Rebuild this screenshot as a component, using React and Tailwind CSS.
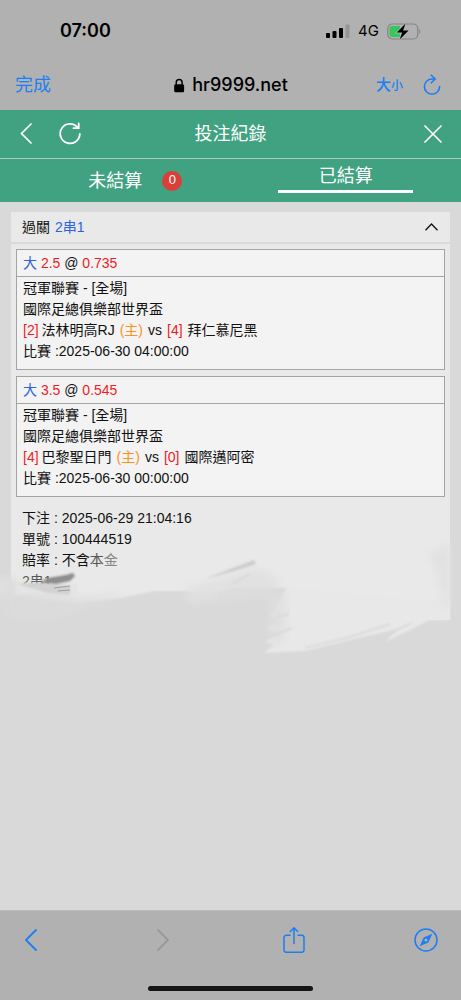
import { ChevronLeft, ChevronRight } from 'lucide-react'

const bets = [
  {
    pick: '2.5',
    odds: '0.735',
    league: '冠軍聯賽 - [全場]',
    cup: '國際足總俱樂部世界盃',
    home: '法林明高RJ',
    homeScore: 2,
    away: '拜仁慕尼黑',
    awayScore: 4,
    time: '2025-06-30 04:00:00',
  },
  {
    pick: '3.5',
    odds: '0.545',
    league: '冠軍聯賽 - [全場]',
    cup: '國際足總俱樂部世界盃',
    home: '巴黎聖日門',
    homeScore: 4,
    away: '國際邁阿密',
    awayScore: 0,
    time: '2025-06-30 00:00:00',
  },
]

function StatusBar() {
  return (
    <div className="flex h-[62px] items-center justify-between pl-[60px] pr-[40px] font-['Inter','Noto_Sans_CJK_TC',sans-serif] text-black">
      <span className="text-lg font-semibold">07:00</span>
      <div className="flex items-center gap-2">
        <svg className="h-[15px] w-6" viewBox="0 0 24 15">
          <rect x="0" y="9" width="4" height="5" rx="1" />
          <rect x="6.5" y="7" width="4" height="7" rx="1" />
          <rect x="13" y="4" width="4" height="10" rx="1" />
          <rect x="19.5" y="0.5" width="4" height="13.5" rx="1" fill="#959595" />
        </svg>
        <span className="text-[15px]">4G</span>
        <svg className="h-[17px] w-[34px]" viewBox="0 0 34 17">
          <rect x="0.8" y="1" width="30" height="15" rx="4.5" fill="none" stroke="#838383" strokeWidth="1.2" />
          <path d="M5.5 3H13v11H5.5a3 3 0 0 1-3-3V6a3 3 0 0 1 3-3z" fill="#34c759" />
          <path d="M32.3 6.2c1.4.5 1.4 4.1 0 4.6z" fill="#838383" />
          <path d="M18.5 0.5 9.8 9.6h5.4L12.6 16.5 21.6 7.4h-5.5z" stroke="#b1b1b1" strokeWidth="1.6" paintOrder="stroke" />
        </svg>
      </div>
    </div>
  )
}

function AddressBar() {
  return (
    <div className="relative flex h-[46px] items-center justify-between pl-[15px] pr-5 font-['Inter','Noto_Sans_CJK_TC',sans-serif]">
      <button className="text-lg text-[#1b7ff2]">完成</button>
      <div className="absolute left-1/2 flex -translate-x-1/2 items-center gap-2 text-black">
        <svg className="h-[15px] w-[11px]" viewBox="0 0 11 15">
          <path d="M2.6 7V4.3a2.9 2.9 0 0 1 5.8 0V7" fill="none" stroke="#000" strokeWidth="1.5" />
          <rect x="0.5" y="6.3" width="10" height="8" rx="1.5" />
        </svg>
        <span className="text-lg font-medium">hr9999.net</span>
      </div>
      <div className="flex items-center gap-5 text-[#1b7ff2]">
        <button className="flex items-baseline font-medium">
          <span className="text-[15px]">大</span>
          <span className="text-xs">小</span>
        </button>
        <button aria-label="重新載入">
          <svg className="block h-[22px] w-[18px]" viewBox="0 0 18 22" fill="none" stroke="currentColor" strokeWidth="1.6" strokeLinecap="round" strokeLinejoin="round">
            <path d="M11.8 5H9a7.6 7.6 0 1 0 7.6 7.6" />
            <path d="M8.3 1.2 12.2 5 8.3 8.8" />
          </svg>
        </button>
      </div>
    </div>
  )
}

function Header() {
  return (
    <header className="bg-[#40a280] text-white">
      <div className="relative flex h-[49px] items-center justify-between border-b border-[#a5cfc0] px-3">
        <div className="flex items-center gap-4">
          <button aria-label="返回">
            <svg className="block size-7" viewBox="0 0 28 28" fill="none" stroke="currentColor" strokeWidth="1.7" strokeLinecap="round">
              <path d="M19 4 9.5 13.5 19 23" />
            </svg>
          </button>
          <button aria-label="刷新">
            <svg className="block size-7" viewBox="0 0 28 28" fill="none" stroke="currentColor" strokeWidth="1.8" strokeLinecap="round">
              <path d="M23.8 14A9.8 9.8 0 1 1 21.5 7.3" />
              <path d="M22.7 3.5V8.2H17.5" />
            </svg>
          </button>
        </div>
        <h1 className="absolute left-1/2 -translate-x-1/2 text-lg">投注紀錄</h1>
        <button aria-label="關閉" className="mr-[6px]">
          <svg className="block size-5" viewBox="0 0 20 20" fill="none" stroke="currentColor" strokeWidth="1.7" strokeLinecap="round">
            <path d="M2 2 18 18M18 2 2 18" />
          </svg>
        </button>
      </div>
      <nav className="grid h-[43px] grid-cols-2 text-lg">
        <button className="flex items-center justify-center">
          <span className="relative">
            未結算
            <span className="absolute left-full top-1 ml-5 flex size-5 items-center justify-center rounded-full bg-[#dc3f3a] font-['Liberation_Sans',sans-serif] text-[13px]">
              0
            </span>
          </span>
        </button>
        <button className="flex flex-col items-center pt-[3px]">
          <span className="leading-7">已結算</span>
          <span className="h-[3px] w-[135px] bg-white" />
        </button>
      </nav>
    </header>
  )
}

function BetCard({ bet }) {
  return (
    <section className="border border-[#a3a5a5] bg-[#f3f3f3]">
      <div className="border-b border-[#a3a5a5] px-[6px] leading-[26px]">
        <span className="text-[#2b63e0]">大</span> <span className="text-[#ee1c25]">{bet.pick}</span> @{' '}
        <span className="text-[#ee1c25]">{bet.odds}</span>
      </div>
      <div className="px-[6px] pb-[7px] pt-px leading-[21px]">
        <p>{bet.league}</p>
        <p>{bet.cup}</p>
        <p className="flex gap-[5px]">
          <span className="flex gap-[3px]">
            <span className="text-[#ee1c25]">[{bet.homeScore}]</span>
            <span>{bet.home}</span>
          </span>
          <span className="text-[#f7941d]">(主)</span>
          <span>vs</span>
          <span className="text-[#ee1c25]">[{bet.awayScore}]</span>
          <span>{bet.away}</span>
        </p>
        <p>比賽 :{bet.time}</p>
      </div>
    </section>
  )
}

// Brush marks that hide the lower part of the slip
function Smudge() {
  return (
    <svg className="pointer-events-none absolute inset-x-0 top-[288px] h-[190px] w-full" viewBox="0 0 461 190" preserveAspectRatio="none">
      <defs>
        <filter id="soft" x="-10%" y="-20%" width="120%" height="140%">
          <feGaussianBlur stdDeviation="4" />
        </filter>
        <filter id="edge" x="-10%" y="-10%" width="120%" height="120%">
          <feGaussianBlur stdDeviation="1" />
        </filter>
      </defs>
      {/* light paint dragged past the left edge */}
      <path d="M-6 88H14V108L-6 104z" fill="#e0e0e0" filter="url(#soft)" />
      {/* erased area */}
      <path d="M10 104 40 110 80 113 120 108 155 101 185 101 205 104 235 98 286 98 282 108 276 118 270 134H6z" fill="#d9d9d9" filter="url(#edge)" />
      <path d="M6 88 22 92 52 102 84 108 130 104 60 128H6z" fill="#dcdcdc" opacity="0.8" filter="url(#soft)" />
      <path d="M186 98 222 88 258 78 282 90 270 108 200 112z" fill="#dedede" opacity="0.7" filter="url(#soft)" />
      <path d="M184 102 222 98 212 110 188 113z" fill="#e2e2e2" opacity="0.8" filter="url(#soft)" />
      {/* light stroke under the right corner */}
      <path d="M280 118 290 98 450 112V130H430L385 152 398 139 350 150 305 161 264 163 274 155 266 151 280 144 268 138 282 132 270 126z" fill="#e8e8e8" filter="url(#edge)" />
      <path d="M268 108 286 100 288 128 284 152 270 158z" fill="#dfdfdf" opacity="0.8" filter="url(#soft)" />
      <g stroke="#dadada" fill="none" filter="url(#edge)">
        <path d="M305 158 350 147 390 134" strokeWidth="2" />
        <path d="M380 148 412 133" strokeWidth="2" />
        <path d="M268 130 288 124M270 146 292 138" strokeWidth="2" />
      </g>
      <path d="M205 89 230 79 254 70 256 74 238 80z" fill="#cdcdcd" filter="url(#edge)" />
      <path d="M232 94 250 84" stroke="#dadada" strokeWidth="3" fill="none" filter="url(#edge)" />
      <path d="M450 53 428 66 438 80 438 94 444 102 442 114 450 118z" fill="#e1e1e1" filter="url(#soft)" />
      {/* smeared last line */}
      <path d="M16 94H44L78 93V104H16z" fill="#e4e4e4" filter="url(#edge)" />
      <path d="M18 94 40 93 70 96 70 105 48 103 34 99z" fill="#d2d2d2" filter="url(#edge)" />
      <path d="M48 88 66 85 73 83 75 86 70 91 56 94 40 92z" fill="#8d8d8d" filter="url(#edge)" />
      <path d="M46 90 70 86M42 93 66 90M54 98 70 96M58 101 70 100" stroke="#909090" fill="none" strokeWidth="0.8" />
    </svg>
  )
}

function BottomBar() {
  return (
    <footer className="border-t border-[#bcbcbc] bg-[#b1b1b1]">
      <div className="flex h-[58px] items-center justify-between pl-[11px] pr-[15px] text-[#1b7ff2] *:flex *:w-10 *:justify-center">
        <button aria-label="上一頁">
          <ChevronLeft className="size-10" strokeWidth={1.1} />
        </button>
        <button aria-label="下一頁" disabled className="text-[#999999]">
          <ChevronRight className="size-10" strokeWidth={1.1} />
        </button>
        <button aria-label="分享">
          <svg className="block h-[26px] w-[22px]" viewBox="0 0 22 26" fill="none" stroke="currentColor" strokeWidth="1.5" strokeLinecap="round" strokeLinejoin="round">
            <path d="M7 8.3H3.3A2.3 2.3 0 0 0 1 10.6V23a2.3 2.3 0 0 0 2.3 2.3h15.4A2.3 2.3 0 0 0 21 23V10.6a2.3 2.3 0 0 0-2.3-2.3H15" />
            <path d="M11 16.5V1M7.3 4.5 11 0.9 14.7 4.5" />
          </svg>
        </button>
        <button aria-label="Safari">
          <svg className="block size-6" viewBox="0 0 24 24">
            <circle cx="12" cy="12" r="11" fill="none" stroke="currentColor" strokeWidth="1.5" />
            <path fillRule="evenodd" d="M18.3 5.7 14.4 14.4 5.7 18.3 9.6 9.6zM12 10.5a1.5 1.5 0 1 0 0 3 1.5 1.5 0 0 0 0-3z" fill="currentColor" />
          </svg>
        </button>
      </div>
      <div className="flex h-[31px] items-center justify-center pb-[2px] pt-[10px]">
        <span className="h-[5px] w-[165px] rounded-full bg-[#151515]" />
      </div>
    </footer>
  )
}

export default function App() {
  return (
    <div className="flex min-h-screen flex-col bg-[#d9d9d9] font-['Liberation_Sans','Noto_Sans_CJK_TC',sans-serif] text-[#111111]">
      <div className="bg-[#b1b1b1] pb-[2px]">
        <StatusBar />
        <AddressBar />
      </div>
      <Header />

      <main className="relative flex-1 px-[11px] pt-[10px] text-sm">
        <div className="bg-[#e9e9e9]">
          <button className="flex h-8 w-full items-center justify-between border-b-2 border-[#dadada] pl-[11px] pr-3">
            <span>
              過關 <span className="ml-px text-[#2b63e0]">2串1</span>
            </span>
            <svg className="h-2 w-[13px]" viewBox="0 0 13 8" fill="none" stroke="currentColor" strokeWidth="1.3">
              <path d="M0.5 7.3 6.5 1 12.5 7.3" />
            </svg>
          </button>
          <div className="space-y-[6px] px-[5px] pt-[5px]">
            {bets.map((bet) => (
              <BetCard key={bet.time} bet={bet} />
            ))}
          </div>
          <div className="px-[11px] pb-[28px] pt-[11px] leading-[21px]">
            <p>下注 : 2025-06-29 21:04:16</p>
            <p>單號 : 100444519</p>
            <p>
              賠率 : 不含<span className="text-[#555555]">本</span>
              <span className="text-[#858585]">金</span>
            </p>
            <p className="text-[#555555]">2串1</p>
          </div>
        </div>
        <Smudge />
      </main>

      <BottomBar />
    </div>
  )
}
